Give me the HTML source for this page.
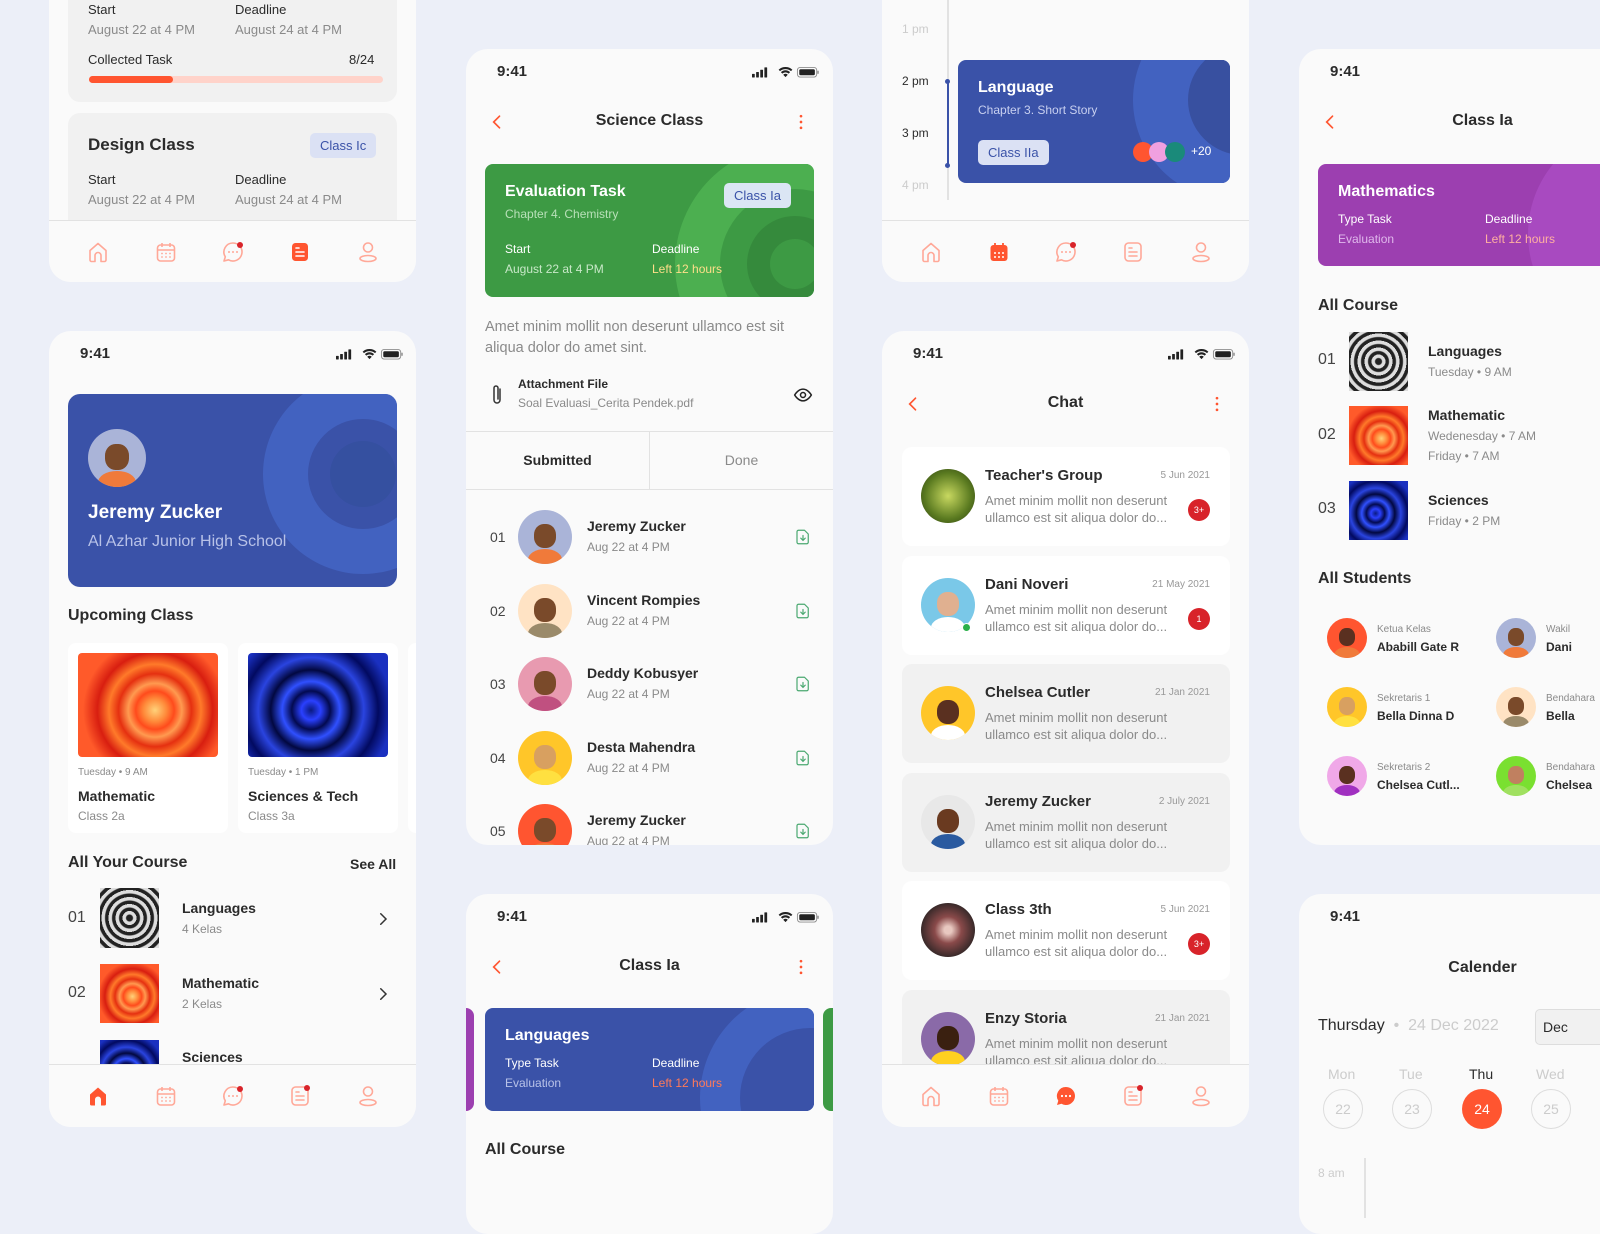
<!DOCTYPE html><html><head><meta charset="utf-8"><style>
*{margin:0;padding:0;box-sizing:border-box}
body{width:1600px;height:1200px;background:#eceff8;position:relative;overflow:hidden;font-family:"Liberation Sans",sans-serif;color:#2b2b2b}
.p{position:absolute;background:#fafafa;border-radius:22px;overflow:hidden}
.a{position:absolute;white-space:nowrap}
.b{font-weight:bold}
.g{color:#8a8a8a}
.nav{position:absolute;left:0;right:0;height:70px;border-top:1px solid #e2e2e2;background:#fafafa}
.nav svg{position:absolute;top:19px}
.av{position:absolute;border-radius:50%;overflow:hidden}
.av i{position:absolute;left:30%;top:26%;width:40%;height:44%;border-radius:45%;background:#7a4a2a}
.av b{position:absolute;left:18%;top:72%;width:64%;height:40%;border-radius:50% 50% 0 0;background:#f07a3a}
.tag{position:absolute;background:#dbe1f4;color:#3a52a8;font-size:13px;border-radius:5px;padding:5px 10px}
.grey{position:absolute;background:#f1f1f1;border-radius:12px}
.img1{background:radial-gradient(circle at 55% 55%,#ffd27a 0,#ff8a3a 12%,#ff4b1c 20%,#ff9a50 28%,#e53010 38%,#ff7a2a 48%,#d81e10 60%,#ff5a2a 75%)}
.img2{background:radial-gradient(circle at 45% 55%,#0a1a80 0,#2a40ff 10%,#030a50 20%,#3050ff 30%,#020840 42%,#2a44e0 55%,#020a60 70%,#1a30c0 85%)}
.img3{background:repeating-radial-gradient(circle at 50% 50%,#222 0,#222 3px,#ddd 4px,#ddd 7px)}
.chat{position:absolute;left:20px;width:328px;height:99px;border-radius:10px}
.chat .nm{position:absolute;left:83px;top:20px;font-size:15px;font-weight:bold}
.chat .dt{position:absolute;right:20px;top:23px;font-size:10px;color:#999}
.chat .tx{position:absolute;left:83px;top:45px;font-size:13px;color:#8a8a8a;line-height:17px}
.chat .bd{position:absolute;right:20px;top:52px;width:22px;height:22px;border-radius:50%;background:#d8232a;color:#fff;font-size:9px;text-align:center;line-height:22px}
</style></head><body>

<svg width="0" height="0" style="position:absolute"><defs>
<symbol id="home" viewBox="0 0 24 24"><path d="M4 10.5L12 3.5l8 7V20a1.5 1.5 0 0 1-1.5 1.5H15v-6a3 3 0 0 0-6 0v6H5.5A1.5 1.5 0 0 1 4 20z" fill="none" stroke="currentColor" stroke-width="1.6" stroke-linejoin="round"/></symbol>
<symbol id="homef" viewBox="0 0 24 24"><path d="M4 10.5L12 3.5l8 7V20a1.5 1.5 0 0 1-1.5 1.5H15v-6a3 3 0 0 0-6 0v6H5.5A1.5 1.5 0 0 1 4 20z" fill="currentColor"/></symbol>
<symbol id="cal" viewBox="0 0 24 24"><rect x="3.5" y="5" width="17" height="16" rx="3" fill="none" stroke="currentColor" stroke-width="1.6"/><path d="M8 3v4M16 3v4M3.5 10h17" stroke="currentColor" stroke-width="1.6"/><g fill="currentColor"><circle cx="8" cy="13.5" r=".9"/><circle cx="12" cy="13.5" r=".9"/><circle cx="16" cy="13.5" r=".9"/><circle cx="8" cy="17" r=".9"/><circle cx="12" cy="17" r=".9"/><circle cx="16" cy="17" r=".9"/></g></symbol>
<symbol id="calf" viewBox="0 0 24 24"><rect x="3.5" y="5" width="17" height="16" rx="3" fill="currentColor"/><path d="M8 3v4M16 3v4" stroke="currentColor" stroke-width="1.8"/><g fill="#fff"><circle cx="8" cy="13" r="1"/><circle cx="12" cy="13" r="1"/><circle cx="16" cy="13" r="1"/><circle cx="8" cy="17" r="1"/><circle cx="12" cy="17" r="1"/><circle cx="16" cy="17" r="1"/></g></symbol>
<symbol id="chat" viewBox="0 0 24 24"><path d="M12 3a9 9 0 1 1-4.5 16.8L3 21l1.3-4.2A9 9 0 0 1 12 3z" fill="none" stroke="currentColor" stroke-width="1.6" stroke-linejoin="round"/><g fill="currentColor"><circle cx="8" cy="12" r="1"/><circle cx="12" cy="12" r="1"/><circle cx="16" cy="12" r="1"/></g><circle cx="19" cy="5" r="3" fill="#d8232a"/></symbol>
<symbol id="chatf" viewBox="0 0 24 24"><path d="M12 3a9 9 0 1 1-4.5 16.8L3 21l1.3-4.2A9 9 0 0 1 12 3z" fill="currentColor"/><g fill="#fff"><circle cx="8" cy="12" r="1.1"/><circle cx="12" cy="12" r="1.1"/><circle cx="16" cy="12" r="1.1"/></g></symbol>
<symbol id="doc" viewBox="0 0 24 24"><rect x="4" y="3" width="16" height="18" rx="3.5" fill="none" stroke="currentColor" stroke-width="1.6"/><path d="M8 8h3M8 12h8M8 16h8" stroke="currentColor" stroke-width="1.6" stroke-linecap="round"/></symbol>
<symbol id="docd" viewBox="0 0 24 24"><rect x="4" y="3" width="16" height="18" rx="3.5" fill="none" stroke="currentColor" stroke-width="1.6"/><path d="M8 8h3M8 12h8M8 16h8" stroke="currentColor" stroke-width="1.6" stroke-linecap="round"/><circle cx="19" cy="4" r="3" fill="#d8232a"/></symbol>
<symbol id="docf" viewBox="0 0 24 24"><rect x="4" y="3" width="16" height="18" rx="3.5" fill="currentColor"/><path d="M8 8h3M8 12h8M8 16h8" stroke="#fff" stroke-width="1.6" stroke-linecap="round"/></symbol>
<symbol id="user" viewBox="0 0 24 24"><circle cx="12" cy="7.5" r="4.5" fill="none" stroke="currentColor" stroke-width="1.6"/><ellipse cx="12" cy="18.5" rx="8" ry="3" fill="none" stroke="currentColor" stroke-width="1.6"/></symbol>
<symbol id="stat" viewBox="0 0 73 12"><g fill="#222"><rect x="0" y="8" width="3" height="4" rx=".5"/><rect x="4.5" y="6" width="3" height="6" rx=".5"/><rect x="9" y="3.5" width="3" height="8.5" rx=".5"/><rect x="13.5" y="1" width="3" height="11" rx=".5"/><path d="M29 3.5a11 11 0 0 1 15 0l-1.5 1.6a9 9 0 0 0-12 0z M31.5 6.2a7 7 0 0 1 10 0l-1.5 1.6a5 5 0 0 0-7 0z M34 9a3.5 3.5 0 0 1 5 0l-2.5 2.6z"/><rect x="49.5" y="1" width="21" height="10.5" rx="3" fill="none" stroke="#222" stroke-opacity=".5"/><rect x="51.5" y="3" width="17" height="6.5" rx="1.5"/><rect x="71.2" y="4.5" width="1.5" height="3.5" rx=".7" fill-opacity=".5"/></g></symbol>
<symbol id="dl" viewBox="0 0 24 24"><path d="M6 3h8l5 5v11a2 2 0 0 1-2 2H6a2 2 0 0 1-2-2V5a2 2 0 0 1 2-2z" fill="none" stroke="#4aa870" stroke-width="1.6" stroke-linejoin="round"/><path d="M12 10v6M9 13.5l3 3 3-3" fill="none" stroke="#4aa870" stroke-width="1.6" stroke-linecap="round"/></symbol>
<symbol id="back" viewBox="0 0 24 24"><path d="M15 5l-7 7 7 7" fill="none" stroke="#ff5530" stroke-width="2" stroke-linecap="round"/></symbol>
<symbol id="keb" viewBox="0 0 24 24"><g fill="#ff5530"><circle cx="12" cy="5" r="1.6"/><circle cx="12" cy="12" r="1.6"/><circle cx="12" cy="19" r="1.6"/></g></symbol>
<symbol id="chev" viewBox="0 0 24 24"><path d="M9 5l7 7-7 7" fill="none" stroke="#333" stroke-width="2" stroke-linecap="round"/></symbol>
</defs></svg>

<!-- COL 1 TOP -->
<div class="p" style="left:49px;top:-40px;width:367px;height:322px">
 <div class="grey" style="left:19px;top:0;width:329px;height:142px"></div>
 <div class="a" style="left:39px;top:42px;font-size:13px">Start</div><div class="a g" style="left:39px;top:62px;font-size:13px">August 22 at 4 PM</div>
 <div class="a" style="left:186px;top:42px;font-size:13px">Deadline</div><div class="a g" style="left:186px;top:62px;font-size:13px">August 24 at 4 PM</div>
 <div class="a" style="left:39px;top:92px;font-size:13px">Collected Task</div><div class="a" style="left:300px;top:92px;font-size:13px">8/24</div>
 <div class="a" style="left:40px;top:116px;width:294px;height:7px;border-radius:4px;background:#ffd3ca"></div>
 <div class="a" style="left:40px;top:116px;width:84px;height:7px;border-radius:4px;background:#ff5530"></div>
 <div class="grey" style="left:19px;top:153px;width:329px;height:140px"></div>
 <div class="a b" style="left:39px;top:175px;font-size:17px">Design Class</div>
 <div class="tag" style="left:261px;top:173px">Class Ic</div>
 <div class="a" style="left:39px;top:212px;font-size:13px">Start</div><div class="a g" style="left:39px;top:232px;font-size:13px">August 22 at 4 PM</div>
 <div class="a" style="left:186px;top:212px;font-size:13px">Deadline</div><div class="a g" style="left:186px;top:232px;font-size:13px">August 24 at 4 PM</div>
 <div class="nav" style="top:260px;color:#ffa898"><svg width="24" height="24" style="left:37px"><use href="#home"/></svg><svg width="24" height="24" style="left:105px"><use href="#cal"/></svg><svg width="24" height="24" style="left:172px"><use href="#chat"/></svg><svg width="24" height="24" style="left:239px;color:#ff5530"><use href="#docf"/></svg><svg width="24" height="24" style="left:307px"><use href="#user"/></svg></div>
</div>

<!-- COL 1 MAIN -->
<div class="p" style="left:49px;top:331px;width:367px;height:796px">
 <div class="a b" style="left:31px;top:14px;font-size:15px">9:41</div>
 <svg class="a" width="67" height="12" style="left:287px;top:17px"><use href="#stat"/></svg>
 <div class="a" style="left:19px;top:63px;width:329px;height:193px;border-radius:12px;background:#3a52a8;overflow:hidden">
  <div class="a" style="left:195px;top:-20px;width:200px;height:200px;border-radius:50%;background:#4262c0"></div>
  <div class="a" style="left:240px;top:25px;width:110px;height:110px;border-radius:50%;background:#3a52a8"></div>
  <div class="a" style="left:262px;top:47px;width:66px;height:66px;border-radius:50%;background:#3550a0"></div>
  <div class="av" style="left:20px;top:35px;width:58px;height:58px;background:#aab4d8"><i></i><b></b></div>
  <div class="a b" style="left:20px;top:108px;font-size:19px;color:#fff">Jeremy Zucker</div>
  <div class="a" style="left:20px;top:139px;font-size:16px;color:#b8c2e8">Al Azhar Junior High School</div>
 </div>
 <div class="a b" style="left:19px;top:276px;font-size:16px">Upcoming Class</div>
 <div class="a" style="left:19px;top:312px;width:160px;height:190px;background:#fff;border-radius:8px"><div class="a img1" style="left:10px;top:10px;width:140px;height:104px;border-radius:4px"></div><div class="a g" style="left:10px;top:124px;font-size:10px">Tuesday • 9 AM</div><div class="a b" style="left:10px;top:145px;font-size:14px">Mathematic</div><div class="a g" style="left:10px;top:166px;font-size:12px">Class 2a</div></div>
 <div class="a" style="left:189px;top:312px;width:160px;height:190px;background:#fff;border-radius:8px"><div class="a img2" style="left:10px;top:10px;width:140px;height:104px;border-radius:4px"></div><div class="a g" style="left:10px;top:124px;font-size:10px">Tuesday • 1 PM</div><div class="a b" style="left:10px;top:145px;font-size:14px">Sciences &amp; Tech</div><div class="a g" style="left:10px;top:166px;font-size:12px">Class 3a</div></div>
 <div class="a" style="left:359px;top:312px;width:20px;height:190px;background:#fff;border-radius:8px"></div>
 <div class="a b" style="left:19px;top:523px;font-size:16px">All Your Course</div><div class="a b" style="left:301px;top:525px;font-size:14px">See All</div>
 <div class="a" style="left:19px;top:578px;font-size:16px;color:#444">01</div><div class="a img3" style="left:51px;top:557px;width:59px;height:60px"></div><div class="a b" style="left:133px;top:569px;font-size:14px">Languages</div><div class="a g" style="left:133px;top:591px;font-size:12px">4 Kelas</div><svg class="a" width="18" height="18" style="left:325px;top:579px"><use href="#chev"/></svg>
 <div class="a" style="left:19px;top:653px;font-size:16px;color:#444">02</div><div class="a img1" style="left:51px;top:633px;width:59px;height:59px"></div><div class="a b" style="left:133px;top:644px;font-size:14px">Mathematic</div><div class="a g" style="left:133px;top:666px;font-size:12px">2 Kelas</div><svg class="a" width="18" height="18" style="left:325px;top:654px"><use href="#chev"/></svg>
 <div class="a img2" style="left:51px;top:709px;width:59px;height:59px"></div><div class="a b" style="left:133px;top:718px;font-size:14px">Sciences</div>
 <div class="nav" style="top:733px;color:#ffa898"><svg width="24" height="24" style="left:37px;color:#ff5530"><use href="#homef"/></svg><svg width="24" height="24" style="left:105px"><use href="#cal"/></svg><svg width="24" height="24" style="left:172px"><use href="#chat"/></svg><svg width="24" height="24" style="left:239px"><use href="#docd"/></svg><svg width="24" height="24" style="left:307px"><use href="#user"/></svg></div>
</div>

<!-- COL 2 MAIN -->
<div class="p" style="left:466px;top:49px;width:367px;height:796px">
 <div class="a b" style="left:31px;top:14px;font-size:15px">9:41</div>
 <svg class="a" width="67" height="12" style="left:286px;top:17px"><use href="#stat"/></svg>
 <svg class="a" width="20" height="20" style="left:21px;top:63px"><use href="#back"/></svg>
 <div class="a b" style="left:0;width:367px;text-align:center;top:63px;font-size:16px">Science Class</div>
 <svg class="a" width="20" height="20" style="left:325px;top:63px"><use href="#keb"/></svg>
 <div class="a" style="left:19px;top:115px;width:329px;height:133px;border-radius:8px;background:#3d9a44;overflow:hidden">
  <div class="a" style="left:190px;top:-20px;width:240px;height:240px;border-radius:50%;background:#4caf50"></div>
  <div class="a" style="left:235px;top:25px;width:150px;height:150px;border-radius:50%;background:#3d9a44"></div>
  <div class="a" style="left:262px;top:52px;width:96px;height:96px;border-radius:50%;background:#358a3c"></div>
  <div class="a" style="left:285px;top:75px;width:50px;height:50px;border-radius:50%;background:#3d9a44"></div>
  <div class="a b" style="left:20px;top:19px;font-size:16px;color:#fff">Evaluation Task</div>
  <div class="a" style="left:20px;top:43px;font-size:12px;color:#b8e0b8">Chapter 4. Chemistry</div>
  <div class="tag" style="left:239px;top:19px;background:#dbe6f4">Class Ia</div>
  <div class="a" style="left:20px;top:78px;font-size:12px;color:#fff">Start</div><div class="a" style="left:20px;top:98px;font-size:12px;color:#c8e8c8">August 22 at 4 PM</div>
  <div class="a" style="left:167px;top:78px;font-size:12px;color:#fff">Deadline</div><div class="a" style="left:167px;top:98px;font-size:12px;color:#ffdf8a">Left 12 hours</div>
 </div>
 <div class="a g" style="left:19px;top:268px;font-size:14.5px;line-height:21px;white-space:normal;width:335px">Amet minim mollit non deserunt ullamco est sit aliqua dolor do amet sint.</div>
 <svg class="a" width="20" height="24" style="left:21px;top:334px" viewBox="0 0 20 24"><path d="M13 6v11a3 3 0 0 1-6 0V5a2 2 0 0 1 4 0v11" fill="none" stroke="#333" stroke-width="1.5" stroke-linecap="round"/></svg>
 <div class="a b" style="left:52px;top:328px;font-size:12px">Attachment File</div>
 <div class="a g" style="left:52px;top:347px;font-size:12px">Soal Evaluasi_Cerita Pendek.pdf</div>
 <svg class="a" width="20" height="20" style="left:327px;top:336px" viewBox="0 0 24 24"><path d="M2 12s4-7 10-7 10 7 10 7-4 7-10 7S2 12 2 12z" fill="none" stroke="#222" stroke-width="1.8"/><circle cx="12" cy="12" r="3" fill="none" stroke="#222" stroke-width="1.8"/></svg>
 <div class="a" style="left:0;top:382px;width:367px;height:59px;border-top:1px solid #e2e2e2;border-bottom:1px solid #e2e2e2"></div>
 <div class="a" style="left:183px;top:382px;width:1px;height:59px;background:#e2e2e2"></div>
 <div class="a b" style="left:0;width:183px;text-align:center;top:403px;font-size:14px">Submitted</div>
 <div class="a g" style="left:184px;width:183px;text-align:center;top:403px;font-size:14px">Done</div>
 <div class="a" style="left:24px;top:480px;font-size:14px;color:#444">01</div><div class="av" style="left:52px;top:461px;width:54px;height:54px;background:#aab4d8"><i></i><b></b></div><div class="a b" style="left:121px;top:469px;font-size:14px">Jeremy Zucker</div><div class="a g" style="left:121px;top:491px;font-size:12px">Aug 22 at 4 PM</div><svg class="a" width="18" height="18" style="left:328px;top:479px"><use href="#dl"/></svg>
 <div class="a" style="left:24px;top:554px;font-size:14px;color:#444">02</div><div class="av" style="left:52px;top:535px;width:54px;height:54px;background:#ffe3c4"><i></i><b style="background:#9a8a6a"></b></div><div class="a b" style="left:121px;top:543px;font-size:14px">Vincent Rompies</div><div class="a g" style="left:121px;top:565px;font-size:12px">Aug 22 at 4 PM</div><svg class="a" width="18" height="18" style="left:328px;top:553px"><use href="#dl"/></svg>
 <div class="a" style="left:24px;top:627px;font-size:14px;color:#444">03</div><div class="av" style="left:52px;top:608px;width:54px;height:54px;background:#e89ab0"><i></i><b style="background:#c05080"></b></div><div class="a b" style="left:121px;top:616px;font-size:14px">Deddy Kobusyer</div><div class="a g" style="left:121px;top:638px;font-size:12px">Aug 22 at 4 PM</div><svg class="a" width="18" height="18" style="left:328px;top:626px"><use href="#dl"/></svg>
 <div class="a" style="left:24px;top:701px;font-size:14px;color:#444">04</div><div class="av" style="left:52px;top:682px;width:54px;height:54px;background:#ffc629"><i style="background:#d8a060"></i><b style="background:#ffe040"></b></div><div class="a b" style="left:121px;top:690px;font-size:14px">Desta Mahendra</div><div class="a g" style="left:121px;top:712px;font-size:12px">Aug 22 at 4 PM</div><svg class="a" width="18" height="18" style="left:328px;top:700px"><use href="#dl"/></svg>
 <div class="a" style="left:24px;top:774px;font-size:14px;color:#444">05</div><div class="av" style="left:52px;top:755px;width:54px;height:54px;background:#ff5530"><i></i><b></b></div><div class="a b" style="left:121px;top:763px;font-size:14px">Jeremy Zucker</div><div class="a g" style="left:121px;top:785px;font-size:12px">Aug 22 at 4 PM</div><svg class="a" width="18" height="18" style="left:328px;top:773px"><use href="#dl"/></svg>
</div>

<!-- COL 2 BOTTOM -->
<div class="p" style="left:466px;top:894px;width:367px;height:340px">
 <div class="a b" style="left:31px;top:14px;font-size:15px">9:41</div>
 <svg class="a" width="67" height="12" style="left:286px;top:17px"><use href="#stat"/></svg>
 <svg class="a" width="20" height="20" style="left:21px;top:63px"><use href="#back"/></svg>
 <div class="a b" style="left:0;width:367px;text-align:center;top:63px;font-size:16px">Class Ia</div>
 <svg class="a" width="20" height="20" style="left:325px;top:63px"><use href="#keb"/></svg>
 <div class="a" style="left:-10px;top:114px;width:18px;height:103px;border-radius:8px;background:#9c3fb0"></div>
 <div class="a" style="left:357px;top:114px;width:18px;height:103px;border-radius:8px;background:#3d9a44"></div>
 <div class="a" style="left:19px;top:114px;width:329px;height:103px;border-radius:8px;background:#3a52a8;overflow:hidden">
  <div class="a" style="left:215px;top:-20px;width:220px;height:220px;border-radius:50%;background:#4262c0"></div>
  <div class="a" style="left:255px;top:20px;width:140px;height:140px;border-radius:50%;background:#3a52a8"></div>
  <div class="a b" style="left:20px;top:19px;font-size:16px;color:#fff">Languages</div>
  <div class="a" style="left:20px;top:48px;font-size:12px;color:#fff">Type Task</div><div class="a" style="left:20px;top:68px;font-size:12px;color:#b8c2e8">Evaluation</div>
  <div class="a" style="left:167px;top:48px;font-size:12px;color:#fff">Deadline</div><div class="a" style="left:167px;top:68px;font-size:12px;color:#ff7a5a">Left 12 hours</div>
 </div>
 <div class="a b" style="left:19px;top:247px;font-size:16px">All Course</div>
</div>

<!-- COL 3 TOP -->
<div class="p" style="left:882px;top:-40px;width:367px;height:322px">
 <div class="a" style="left:65px;top:0;width:2px;height:240px;background:#e2e2e2"></div>
 <div class="a" style="left:65px;top:121px;width:2px;height:84px;background:#3a52a8"></div>
 <div class="a" style="left:63px;top:119px;width:5px;height:5px;border-radius:50%;background:#3a52a8"></div>
 <div class="a" style="left:63px;top:203px;width:5px;height:5px;border-radius:50%;background:#3a52a8"></div>
 <div class="a" style="left:20px;top:62px;font-size:12px;color:#ccc">1 pm</div>
 <div class="a" style="left:20px;top:114px;font-size:12px">2 pm</div>
 <div class="a" style="left:20px;top:166px;font-size:12px">3 pm</div>
 <div class="a" style="left:20px;top:218px;font-size:12px;color:#ccc">4 pm</div>
 <div class="a" style="left:76px;top:100px;width:272px;height:123px;border-radius:8px;background:#3a52a8;overflow:hidden">
  <div class="a" style="left:175px;top:-60px;width:200px;height:200px;border-radius:50%;background:#4262c0"></div>
  <div class="a" style="left:230px;top:-15px;width:110px;height:110px;border-radius:50%;background:#3850a0"></div>
  <div class="a b" style="left:20px;top:19px;font-size:16px;color:#fff">Language</div>
  <div class="a" style="left:20px;top:43px;font-size:12px;color:#c8d0f0">Chapter 3. Short Story</div>
  <div class="tag" style="left:20px;top:80px">Class IIa</div>
  <div class="a" style="left:175px;top:82px;width:20px;height:20px;border-radius:50%;background:#ff5530"></div>
  <div class="a" style="left:191px;top:82px;width:20px;height:20px;border-radius:50%;background:#f0a0e0"></div>
  <div class="a" style="left:207px;top:82px;width:20px;height:20px;border-radius:50%;background:#1a8a7a"></div>
  <div class="a" style="left:233px;top:84px;font-size:12px;color:#fff">+20</div>
 </div>
 <div class="nav" style="top:260px;color:#ffa898"><svg width="24" height="24" style="left:37px"><use href="#home"/></svg><svg width="24" height="24" style="left:105px;color:#ff5530"><use href="#calf"/></svg><svg width="24" height="24" style="left:172px"><use href="#chat"/></svg><svg width="24" height="24" style="left:239px"><use href="#doc"/></svg><svg width="24" height="24" style="left:307px"><use href="#user"/></svg></div>
</div>

<!-- COL 3 CHAT -->
<div class="p" style="left:882px;top:331px;width:367px;height:796px">
 <div class="a b" style="left:31px;top:14px;font-size:15px">9:41</div>
 <svg class="a" width="67" height="12" style="left:286px;top:17px"><use href="#stat"/></svg>
 <svg class="a" width="20" height="20" style="left:21px;top:63px"><use href="#back"/></svg>
 <div class="a b" style="left:0;width:367px;text-align:center;top:63px;font-size:16px">Chat</div>
 <svg class="a" width="20" height="20" style="left:325px;top:63px"><use href="#keb"/></svg>
 <div class="chat" style="top:116px;background:#fff"><div class="av" style="left:19px;top:22px;width:54px;height:54px;background:radial-gradient(circle,#c8d860,#5a7a20 60%,#2a3a10)"></div><div class="nm">Teacher's Group</div><div class="dt">5 Jun 2021</div><div class="tx">Amet minim mollit non deserunt<br>ullamco est sit aliqua dolor do...</div><div class="bd">3+</div></div>
 <div class="chat" style="top:225px;background:#fff"><div class="av" style="left:19px;top:22px;width:54px;height:54px;background:#7ac8e8"><i style="background:#e0b090"></i><b style="background:#fff"></b></div><div class="a" style="left:60px;top:67px;width:9px;height:9px;border-radius:50%;background:#2ab04a;border:1.5px solid #fff"></div><div class="nm">Dani Noveri</div><div class="dt">21 May 2021</div><div class="tx">Amet minim mollit non deserunt<br>ullamco est sit aliqua dolor do...</div><div class="bd">1</div></div>
 <div class="chat" style="top:333px;background:#f1f1f1"><div class="av" style="left:19px;top:22px;width:54px;height:54px;background:#ffc629"><i style="background:#5a3020"></i><b style="background:#fff"></b></div><div class="nm">Chelsea Cutler</div><div class="dt">21 Jan 2021</div><div class="tx">Amet minim mollit non deserunt<br>ullamco est sit aliqua dolor do...</div></div>
 <div class="chat" style="top:442px;background:#f1f1f1"><div class="av" style="left:19px;top:22px;width:54px;height:54px;background:#e8e8e8"><i style="background:#6a3a20"></i><b style="background:#2a5aa0"></b></div><div class="nm">Jeremy Zucker</div><div class="dt">2 July 2021</div><div class="tx">Amet minim mollit non deserunt<br>ullamco est sit aliqua dolor do...</div></div>
 <div class="chat" style="top:550px;background:#fff"><div class="av" style="left:19px;top:22px;width:54px;height:54px;background:radial-gradient(circle,#e8c8c0 10%,#8a4a4a 35%,#3a2a2a 70%)"></div><div class="nm">Class 3th</div><div class="dt">5 Jun 2021</div><div class="tx">Amet minim mollit non deserunt<br>ullamco est sit aliqua dolor do...</div><div class="bd">3+</div></div>
 <div class="chat" style="top:659px;background:#f1f1f1"><div class="av" style="left:19px;top:22px;width:54px;height:54px;background:#8a6aa8"><i style="background:#3a2010"></i><b style="background:#ffd020"></b></div><div class="nm">Enzy Storia</div><div class="dt">21 Jan 2021</div><div class="tx">Amet minim mollit non deserunt<br>ullamco est sit aliqua dolor do...</div></div>
 <div class="nav" style="top:733px;color:#ffa898"><svg width="24" height="24" style="left:37px"><use href="#home"/></svg><svg width="24" height="24" style="left:105px"><use href="#cal"/></svg><svg width="24" height="24" style="left:172px;color:#ff5530"><use href="#chatf"/></svg><svg width="24" height="24" style="left:239px"><use href="#docd"/></svg><svg width="24" height="24" style="left:307px"><use href="#user"/></svg></div>
</div>

<!-- COL 4 TOP -->
<div class="p" style="left:1299px;top:49px;width:367px;height:796px">
 <div class="a b" style="left:31px;top:14px;font-size:15px">9:41</div>
 <svg class="a" width="20" height="20" style="left:21px;top:63px"><use href="#back"/></svg>
 <div class="a b" style="left:0;width:367px;text-align:center;top:63px;font-size:16px">Class Ia</div>
 <div class="a" style="left:19px;top:115px;width:329px;height:102px;border-radius:8px;background:#9c3fb0;overflow:hidden">
  <div class="a" style="left:210px;top:-40px;width:220px;height:220px;border-radius:50%;background:#a84ac0"></div>
  <div class="a b" style="left:20px;top:19px;font-size:16px;color:#fff">Mathematics</div>
  <div class="a" style="left:20px;top:48px;font-size:12px;color:#fff">Type Task</div><div class="a" style="left:20px;top:68px;font-size:12px;color:#e0b8ec">Evaluation</div>
  <div class="a" style="left:167px;top:48px;font-size:12px;color:#fff">Deadline</div><div class="a" style="left:167px;top:68px;font-size:12px;color:#ffb0a0">Left 12 hours</div>
 </div>
 <div class="a b" style="left:19px;top:248px;font-size:16px">All Course</div>
 <div class="a" style="left:19px;top:302px;font-size:16px;color:#444">01</div><div class="a img3" style="left:50px;top:283px;width:59px;height:59px"></div><div class="a b" style="left:129px;top:294px;font-size:14px">Languages</div><div class="a g" style="left:129px;top:316px;font-size:12px">Tuesday • 9 AM</div>
 <div class="a" style="left:19px;top:377px;font-size:16px;color:#444">02</div><div class="a img1" style="left:50px;top:357px;width:59px;height:59px"></div><div class="a b" style="left:129px;top:358px;font-size:14px">Mathematic</div><div class="a g" style="left:129px;top:380px;font-size:12px">Wedenesday • 7 AM</div><div class="a g" style="left:129px;top:400px;font-size:12px">Friday • 7 AM</div>
 <div class="a" style="left:19px;top:451px;font-size:16px;color:#444">03</div><div class="a img2" style="left:50px;top:432px;width:59px;height:59px"></div><div class="a b" style="left:129px;top:443px;font-size:14px">Sciences</div><div class="a g" style="left:129px;top:465px;font-size:12px">Friday • 2 PM</div>
 <div class="a b" style="left:19px;top:521px;font-size:16px">All Students</div>
 <div class="av" style="left:28px;top:569px;width:40px;height:40px;background:#ff5530"><i style="background:#5a3020"></i><b></b></div><div class="a g" style="left:78px;top:575px;font-size:10px">Ketua Kelas</div><div class="a b" style="left:78px;top:591px;font-size:12px">Ababill Gate R</div>
 <div class="av" style="left:28px;top:638px;width:40px;height:40px;background:#ffc629"><i style="background:#d8a060"></i><b style="background:#ffe040"></b></div><div class="a g" style="left:78px;top:644px;font-size:10px">Sekretaris 1</div><div class="a b" style="left:78px;top:660px;font-size:12px">Bella Dinna D</div>
 <div class="av" style="left:28px;top:707px;width:40px;height:40px;background:#f0a8e8"><i style="background:#5a3020"></i><b style="background:#a030c0"></b></div><div class="a g" style="left:78px;top:713px;font-size:10px">Sekretaris 2</div><div class="a b" style="left:78px;top:729px;font-size:12px">Chelsea Cutl...</div>
 <div class="av" style="left:197px;top:569px;width:40px;height:40px;background:#aab4d8"><i></i><b></b></div><div class="a g" style="left:247px;top:575px;font-size:10px">Wakil</div><div class="a b" style="left:247px;top:591px;font-size:12px">Dani</div>
 <div class="av" style="left:197px;top:638px;width:40px;height:40px;background:#ffe3c4"><i></i><b style="background:#9a8a6a"></b></div><div class="a g" style="left:247px;top:644px;font-size:10px">Bendahara</div><div class="a b" style="left:247px;top:660px;font-size:12px">Bella</div>
 <div class="av" style="left:197px;top:707px;width:40px;height:40px;background:#7ae030"><i style="background:#c08060"></i><b style="background:#a0e060"></b></div><div class="a g" style="left:247px;top:713px;font-size:10px">Bendahara</div><div class="a b" style="left:247px;top:729px;font-size:12px">Chelsea</div>
</div>

<!-- COL 4 BOTTOM -->
<div class="p" style="left:1299px;top:894px;width:367px;height:340px">
 <div class="a b" style="left:31px;top:14px;font-size:15px">9:41</div>
 <div class="a b" style="left:0;width:367px;text-align:center;top:65px;font-size:16px">Calender</div>
 <div class="a" style="left:19px;top:123px;font-size:16px">Thursday <span style="color:#ccc">&nbsp;•&nbsp; 24 Dec 2022</span></div>
 <div class="a" style="left:236px;top:115px;width:80px;height:36px;border:1px solid #ddd;border-radius:5px;background:#f1f1f1;font-size:14px;padding:9px 7px">Dec</div>
 <div class="a" style="left:29px;top:172px;font-size:14px;color:#ccc">Mon</div><div class="a" style="left:24px;top:195px;width:40px;height:40px;border:1px solid #ddd;border-radius:50%;color:#ccc;font-size:14px;text-align:center;line-height:38px">22</div>
 <div class="a" style="left:100px;top:172px;font-size:14px;color:#ccc">Tue</div><div class="a" style="left:93px;top:195px;width:40px;height:40px;border:1px solid #ddd;border-radius:50%;color:#ccc;font-size:14px;text-align:center;line-height:38px">23</div>
 <div class="a" style="left:170px;top:172px;font-size:14px">Thu</div><div class="a" style="left:163px;top:195px;width:40px;height:40px;border-radius:50%;background:#ff5530;color:#fff;font-size:14px;text-align:center;line-height:40px">24</div>
 <div class="a" style="left:237px;top:172px;font-size:14px;color:#ccc">Wed</div><div class="a" style="left:232px;top:195px;width:40px;height:40px;border:1px solid #ddd;border-radius:50%;color:#ccc;font-size:14px;text-align:center;line-height:38px">25</div>
 <div class="a" style="left:65px;top:264px;width:2px;height:60px;background:#e2e2e2"></div>
 <div class="a" style="left:19px;top:272px;font-size:12px;color:#ccc">8 am</div>
</div>
</body></html>
